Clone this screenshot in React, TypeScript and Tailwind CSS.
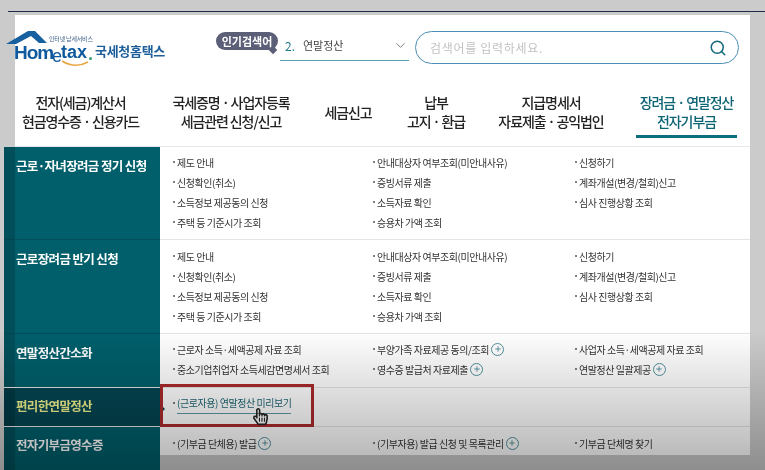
import { Search, ChevronDown, Plus } from 'lucide-react'
import { FaRegHandPointer } from 'react-icons/fa'

const navItems = [
  { lines: ['전자(세금)계산서', '현금영수증 · 신용카드'], w: 'w-[131px]' },
  { lines: ['국세증명 · 사업자등록', '세금관련 신청/신고'], w: 'w-[170px]' },
  { lines: ['세금신고'], w: 'w-[64px]' },
  { lines: ['납부', '고지 · 환급'], w: 'w-[112px]' },
  { lines: ['지급명세서', '자료제출 · 공익법인'], w: 'w-[118px]' },
]

const PlusIcon = () => (
  <span className="inline-flex w-[13px] h-[13px] ml-[2px] rounded-full border border-[#4f8f9c] items-center justify-center align-middle">
    <Plus size={8} strokeWidth={2.5} className="text-[#3f8492]" />
  </span>
)

const Dot = () => <span className="w-[2px] h-[2px] mr-[2px] rounded-full bg-[#555] shrink-0" />

const Item = ({ text, plus }: { text: string; plus?: boolean }) => (
  <div className="h-[20px] flex items-center text-[10px] tracking-[-0.45px] text-[#333] whitespace-nowrap">
    <Dot />
    <span>{text}</span>
    {plus && <PlusIcon />}
  </div>
)

const sections = [
  {
    title: '근로·자녀장려금 정기 신청',
    h: 'h-[93px]',
    pt: 'pt-[5px]',
    cols: [
      ['제도 안내', '신청확인(취소)', '소득정보 제공동의 신청', '주택 등 기준시가 조회'],
      ['안내대상자 여부조회(미안내사유)', '증빙서류 제출', '소득자료 확인', '승용차 가액 조회'],
      ['신청하기', '계좌개설(변경/철회)신고', '심사 진행상황 조회'],
    ],
  },
  {
    title: '근로장려금 반기 신청',
    h: 'h-[94px]',
    pt: 'pt-[6px]',
    cols: [
      ['제도 안내', '신청확인(취소)', '소득정보 제공동의 신청', '주택 등 기준시가 조회'],
      ['안내대상자 여부조회(미안내사유)', '증빙서류 제출', '소득자료 확인', '승용차 가액 조회'],
      ['신청하기', '계좌개설(변경/철회)신고', '심사 진행상황 조회'],
    ],
  },
]

export default function App() {
  return (
    <div className="relative w-[765px] h-[470px] overflow-hidden bg-[#cbcbcb] blur-[0.35px]" style={{ fontFamily: '"Noto Sans CJK KR", "Noto Sans", sans-serif' }}>
      <div className="h-[11px]" />
      <div className="h-[1px] ml-[8px] bg-[#23284a]" />
      <div className="h-[3px]" />

      <div className="ml-[15px] w-[735px] h-[440px] bg-white">
        {/* header */}
        <div className="h-[61px] flex items-start">
          <div className="relative -ml-[9px] mt-[16px] w-[160px] h-[38px] shrink-0">
            <svg width="42" height="14" viewBox="0 0 42 14" className="absolute left-0 top-0">
              <path d="M0 13 L22 0 L29 0 L41 12 L33 12 L25 5 L10 13 Z" fill="#16609f" />
            </svg>
            <span className="absolute left-[43px] top-[5px] text-[6px] leading-none text-[#3c5f86] tracking-[-0.2px] whitespace-nowrap">인터넷 납세서비스</span>
            <span className="absolute left-[8px] top-[12px] text-[19px] leading-none font-bold text-[#0f5a9e] tracking-[-1px]" style={{ fontFamily: '"Liberation Sans", sans-serif' }}>Hom</span>
            <span className="absolute left-[46px] top-[16px] text-[18px] leading-none text-[#0f5a9e]" style={{ fontFamily: '"Liberation Sans", sans-serif' }}>e</span>
            <span className="absolute left-[55px] top-[12px] text-[18px] leading-none font-bold text-[#0f5a9e]" style={{ fontFamily: '"Liberation Sans", sans-serif' }}>tax</span>
            <span className="absolute left-[83px] top-[26px] w-[3px] h-[3px] rounded-full bg-[#3a9a6d]" />
            <svg width="30" height="8" viewBox="0 0 30 8" className="absolute left-[55px] top-[29px]">
              <path d="M1 1 Q14 9 27 2" fill="none" stroke="#e8a545" strokeWidth="1.5" />
            </svg>
            <span className="absolute left-[89px] top-[10px] text-[13px] leading-[20px] font-bold text-[#1d5f9a] tracking-[-0.3px] whitespace-nowrap">국세청홈택스</span>
          </div>

          <div className="relative ml-[50px] mt-[17px] w-[62px] h-[18px] rounded-[9px] bg-[#5c5f78] flex items-center justify-center text-[11px] font-bold text-white shrink-0">
            인기검색어
            <span className="absolute right-[2px] -bottom-[3px] w-[6px] h-[6px] bg-[#5c5f78] rotate-45" />
          </div>

          <div className="ml-[2px] mt-[16px] w-[129px] h-[30px] border-b-[1.5px] border-[#55a4b4] flex items-center text-[11px] shrink-0">
            <span className="ml-[5px] text-[#1f7a8c] text-[12px]">2.</span>
            <span className="ml-[8px] text-[#444]">연말정산</span>
            <ChevronDown size={15} strokeWidth={1.2} className="ml-auto mr-[1px] text-[#555]" />
          </div>

          <div className="ml-[6px] mt-[16px] w-[324px] h-[33px] rounded-full border-[1.5px] border-[#4b8fb4] flex items-center pl-[14px] pr-[11px] shrink-0">
            <span className="text-[12px] text-[#c2c2c2] tracking-[0.7px]">검색어를 입력하세요.</span>
            <Search size={18} strokeWidth={2} className="ml-auto text-[#14697a]" />
          </div>
        </div>

        {/* main nav */}
        <div className="h-[71px] flex items-start border-b border-[#e6e6e6]">
          {navItems.map((n) => (
            <div key={n.lines[0]} className={`${n.w} h-[70px] pt-[21px] pb-[19px] flex flex-col justify-center items-center text-[14px] leading-[19px] font-medium text-[#222] tracking-[-1.1px] whitespace-nowrap`}>
              {n.lines.map((l) => <div key={l}>{l}</div>)}
            </div>
          ))}
          <div className="ml-[26px] w-[101px] h-[62px] pt-[13px] border-b-[3px] border-[#0b6e7d] flex flex-col justify-center items-center text-[14px] leading-[19px] font-medium text-[#0d6473] tracking-[-1.1px] whitespace-nowrap">
            <div>장려금 · 연말정산</div>
            <div>전자기부금</div>
          </div>
        </div>

        {/* menu table */}
        <div className="-ml-[11px]">
          {sections.map((s) => (
            <div key={s.title} className={`${s.h} flex border-b border-[#e4e4e4]`}>
              <div className="w-[11px] bg-[#004f5a] border-b border-[#034650] -mb-[1px]" />
              <div className="w-[145px] bg-[#005f6b] border-b border-[#034e59] -mb-[1px] pl-[1px] pt-[10px] text-[12.5px] leading-[18px] font-bold text-white tracking-[-0.65px] whitespace-nowrap">{s.title}</div>
              <div className={`flex-1 pl-[13px] ${s.pt} grid grid-cols-[200px_202px_1fr]`}>
                {s.cols.map((c, i) => (
                  <div key={i}>{c.map((t) => <Item key={t} text={t} />)}</div>
                ))}
              </div>
            </div>
          ))}

          <div className="h-[54px] flex border-b border-[#e4e4e4]">
            <div className="w-[11px] bg-[#004f5a]" />
            <div className="w-[145px] bg-[#005f6b] pl-[1px] pt-[10px] text-[12.5px] leading-[18px] font-bold text-white tracking-[-0.65px]">연말정산간소화</div>
            <div className="flex-1 pl-[13px] pt-[5px] grid grid-cols-[200px_202px_1fr]">
              <div>
                <Item text="근로자 소득·세액공제 자료 조회" />
                <Item text="중소기업취업자 소득세감면명세서 조회" />
              </div>
              <div>
                <Item text="부양가족 자료제공 동의/조회" plus />
                <Item text="영수증 발급처 자료제출" plus />
              </div>
              <div>
                <Item text="사업자 소득·세액공제 자료 조회" />
                <Item text="연말정산 일괄제공" plus />
              </div>
            </div>
          </div>

          <div className="relative h-[39px] flex border-b border-[#e4e4e4]">
            <div className="w-[11px] bg-[#003a45]" />
            <div className="w-[145px] bg-[#044552] pl-[1px] pt-[9px] text-[12.5px] leading-[18px] font-bold text-[#f0f28e] tracking-[-0.65px]">편리한연말정산</div>
            <div className="flex-1 pl-[13px] pt-[5px] flex items-start">
              <span className="h-[20px] flex items-center"><Dot /></span>
              <span className="text-[10px] leading-[20px] text-[#1f6674] tracking-[-0.45px] border-b border-[#5f97a3] whitespace-nowrap">(근로자용) 연말정산 미리보기</span>
            </div>
            {/* selected-row arrow */}
            <span className="absolute left-[156px] top-[16px] w-0 h-0 border-y-[5px] border-y-transparent border-l-[5px] border-l-[#064452]" />
            {/* red highlight box */}
            <div className="absolute left-[156px] -top-[4px] w-[154px] h-[43px] border-[3px] border-[#ab2a2c]" />
            <FaRegHandPointer size={17} className="absolute left-[248px] top-[20px] text-[#222]" />
          </div>

          <div className="h-[40px] flex">
            <div className="w-[11px] bg-[#004f5a]" />
            <div className="w-[145px] bg-[#005f6b] pl-[1px] pt-[9px] text-[12.5px] leading-[18px] font-bold text-white tracking-[-0.65px]">전자기부금영수증</div>
            <div className="flex-1 pl-[13px] pt-[6px] grid grid-cols-[200px_202px_1fr]">
              <Item text="(기부금 단체용) 발급" plus />
              <Item text="(기부자용) 발급 신청 및 목록관리" plus />
              <Item text="기부금 단체명 찾기" />
            </div>
          </div>
        </div>
      </div>

      {/* sidebar runs past the panel's bottom edge */}
      <div className="absolute left-[4px] top-[455px] w-[156px] h-[15px] flex">
        <div className="w-[11px] bg-[#004f5a]" />
        <div className="flex-1 bg-[#005f6b]" />
      </div>

      {/* video vignette over the lower part of the frame */}
      <div className="absolute inset-x-0 bottom-0 h-[140px] bg-gradient-to-b from-transparent to-black/30 pointer-events-none" />
    </div>
  )
}
